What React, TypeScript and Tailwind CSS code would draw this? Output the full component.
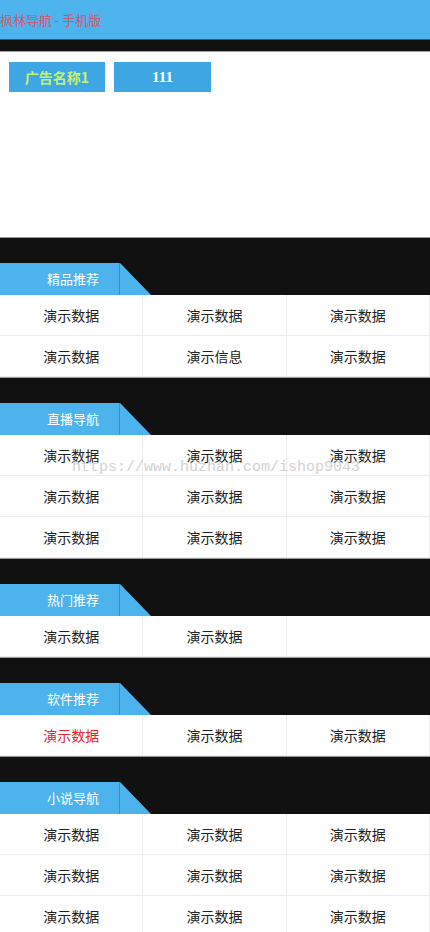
import React from "react";

type Cell = { text: string; red?: boolean };

const sections: { title: string; rows: Cell[][] }[] = [
    {
        title: "精品推荐",
        rows: [
            [{ text: "演示数据" }, { text: "演示数据" }, { text: "演示数据" }],
            [{ text: "演示数据" }, { text: "演示信息" }, { text: "演示数据" }],
        ],
    },
    {
        title: "直播导航",
        rows: [
            [{ text: "演示数据" }, { text: "演示数据" }, { text: "演示数据" }],
            [{ text: "演示数据" }, { text: "演示数据" }, { text: "演示数据" }],
            [{ text: "演示数据" }, { text: "演示数据" }, { text: "演示数据" }],
        ],
    },
    {
        title: "热门推荐",
        rows: [[{ text: "演示数据" }, { text: "演示数据" }]],
    },
    {
        title: "软件推荐",
        rows: [[{ text: "演示数据", red: true }, { text: "演示数据" }, { text: "演示数据" }]],
    },
    {
        title: "小说导航",
        rows: [
            [{ text: "演示数据" }, { text: "演示数据" }, { text: "演示数据" }],
            [{ text: "演示数据" }, { text: "演示数据" }, { text: "演示数据" }],
            [{ text: "演示数据" }, { text: "演示数据" }, { text: "演示数据" }],
        ],
    },
];

const Section: React.FC<{ title: string; rows: Cell[][] }> = ({ title, rows }) => (
    <div>
        <div className="bg-[#111111] pt-[25px] border-t border-[#9a9a9a] flex">
            <div className="w-[120px] h-[32px] bg-[#4db3ec] border-r border-[#3a8fc4] flex items-center pl-[47px] text-[13px] text-white">
                {title}
            </div>
            <svg width="31" height="32" viewBox="0 0 31 32" className="block">
                <polygon points="0,0 31,32 0,32" fill="#4db3ec" />
            </svg>
        </div>
        <div className="bg-white">
            {rows.map((row, i) => (
                <div key={i} className="grid grid-cols-3 h-[41px] border-b border-[#ececec]">
                    {row.map((cell, j) => (
                        <div
                            key={j}
                            className={`flex items-center justify-center text-[14px] border-r border-[#ececec] ${
                                cell.red ? "text-[#e0262a]" : "text-[#222222]"
                            }`}
                        >
                            {cell.text}
                        </div>
                    ))}
                </div>
            ))}
        </div>
    </div>
);

const App: React.FC = () => {
    return (
        <div
            className="relative w-[430px] bg-white overflow-hidden"
            style={{ fontFamily: '"Noto Sans CJK SC", "Noto Sans", sans-serif' }}
        >
            <div className="h-[40px] bg-[#4db3ec] border-b border-[#1f5f86] flex items-center text-[13px] text-[#d4566e]">
                枫林导航 - 手机版
            </div>
            <div className="h-[12px] bg-[#111111] border-b border-[#a0a0a0]" />
            <div className="h-[185px] bg-white flex gap-[9px] pl-[9px] pt-[10px]">
                <div className="w-[96px] h-[30px] bg-[#3fa6e4] flex items-center justify-center text-[14px] font-bold text-[#c4f36a]">
                    广告名称1
                </div>
                <div
                    className="w-[97px] h-[30px] bg-[#3fa6e4] flex items-center justify-center text-[15px] font-bold text-white"
                    style={{ fontFamily: '"Liberation Serif", serif' }}
                >
                    111
                </div>
            </div>

            {sections.map((s) => (
                <Section key={s.title} title={s.title} rows={s.rows} />
            ))}

            <div
                className="absolute left-[72px] top-[457px] text-[15px] text-[#c8c8c8] opacity-80 pointer-events-none whitespace-nowrap"
                style={{ fontFamily: '"Liberation Mono", monospace' }}
            >
                https://www.huzhan.com/ishop9043
            </div>
        </div>
    );
};

export default App;
